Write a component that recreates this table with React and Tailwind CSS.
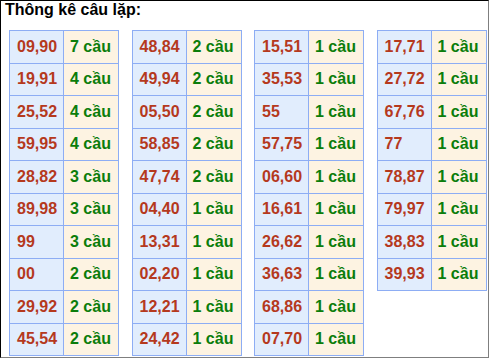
const tables = [
  [["09,90", 7], ["19,91", 4], ["25,52", 4], ["59,95", 4], ["28,82", 3], ["89,98", 3], ["99", 3], ["00", 2], ["29,92", 2], ["45,54", 2]],
  [["48,84", 2], ["49,94", 2], ["05,50", 2], ["58,85", 2], ["47,74", 2], ["04,40", 1], ["13,31", 1], ["02,20", 1], ["12,21", 1], ["24,42", 1]],
  [["15,51", 1], ["35,53", 1], ["55", 1], ["57,75", 1], ["06,60", 1], ["16,61", 1], ["26,62", 1], ["36,63", 1], ["68,86", 1], ["07,70", 1]],
  [["17,71", 1], ["27,72", 1], ["67,76", 1], ["77", 1], ["78,87", 1], ["79,97", 1], ["38,83", 1], ["39,93", 1]],
];

// one block of pairs and counts
function PairTable({ rows }) {
  return (
    <div className="w-[110px] flex flex-col border-l border-t border-[#8dadf4]">
      {rows.map(([pair, count]) => (
        <div key={pair} className="flex h-[32.5px] border-b border-[#8dadf4]">
          <div className="w-[54px] flex items-center pl-[7px] border-r border-[#8dadf4] bg-[#e1edfd] text-[#b5391d]">
            {pair}
          </div>
          <div className="flex-1 flex items-center pl-[6px] border-r border-[#8dadf4] bg-[#fdf3e2] text-[#0b7d0b]">
            {count} cầu
          </div>
        </div>
      ))}
    </div>
  );
}

export default function App() {
  return (
    <div className="w-[489px] h-[358px] bg-white border-l border-t border-black border-r border-b border-r-[#7f7f7f] border-b-[#7f7f7f] font-['Liberation_Sans',Arial,sans-serif] font-bold">
      <div className="h-[29px] pl-[4px] text-[16px] leading-[18px] text-black">Thông kê câu lặp:</div>
      <div className="flex items-start gap-[12.5px] pl-[8px] text-[16px]">
        {tables.map((rows, i) => (
          <PairTable key={i} rows={rows} />
        ))}
      </div>
    </div>
  );
}
